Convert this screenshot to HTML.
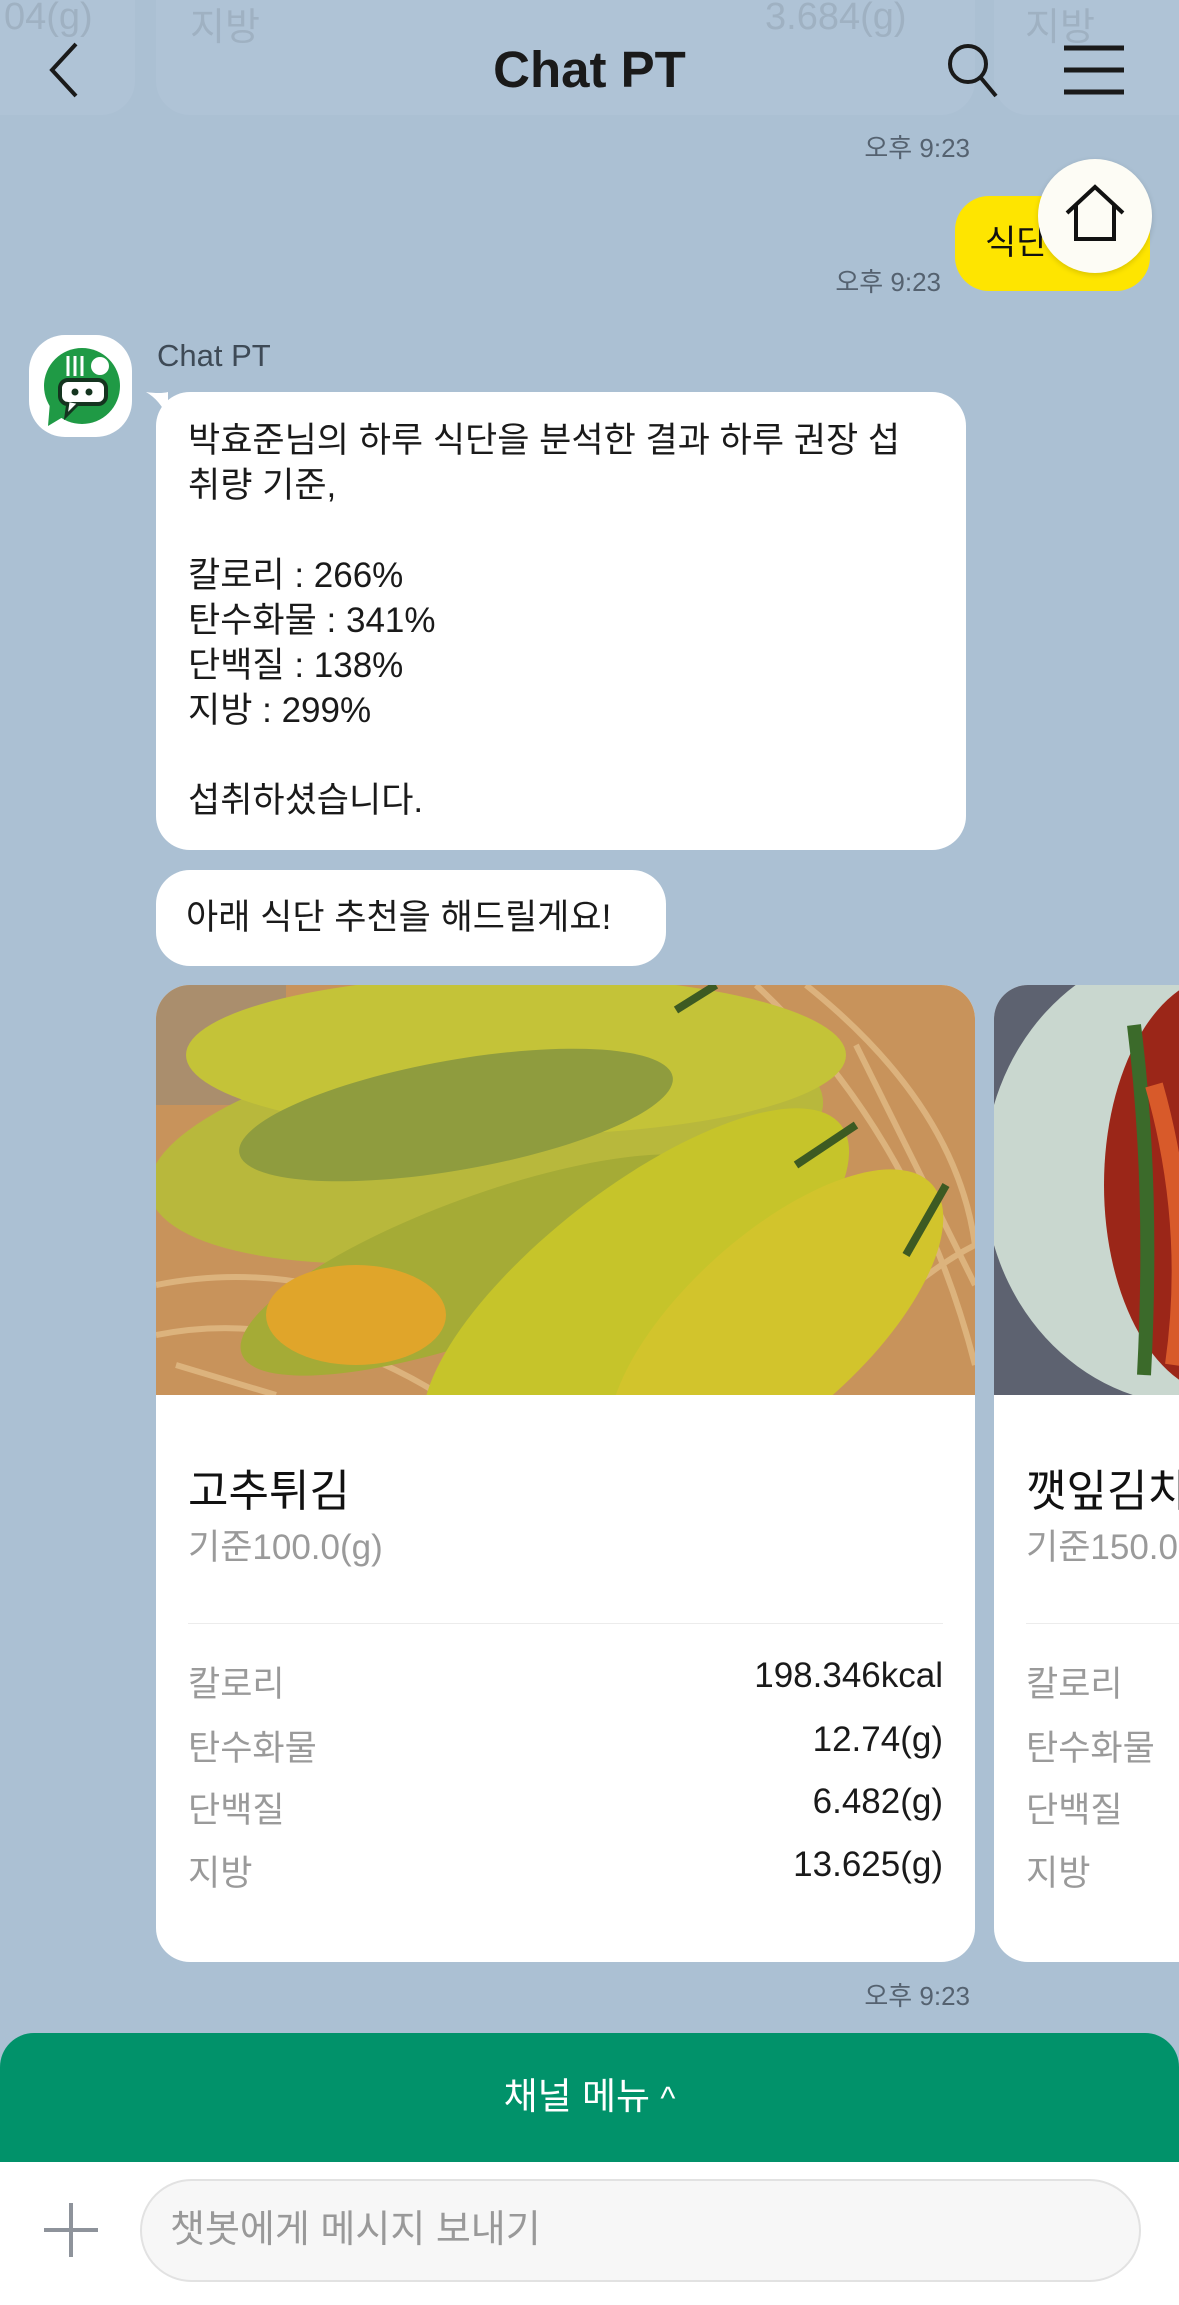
<!DOCTYPE html>
<html><head><meta charset="utf-8">
<style>
*{margin:0;padding:0;box-sizing:border-box}
html,body{width:1179px;height:2305px;overflow:hidden}
body{background:#abc0d3;font-family:"Liberation Sans","Noto Sans CJK KR",sans-serif;position:relative;color:#111}
.abs{position:absolute}
.ts{position:absolute;font-size:26px;color:#556270;white-space:nowrap}
.bub{position:absolute;background:#fff;border-radius:34px}
.t{font-size:35px;line-height:45px;color:#1a1a1a;white-space:nowrap}
.row{position:absolute;left:32px;right:32px;font-size:35px;display:flex;justify-content:space-between}
.row span:first-child{color:#9a9a9a}
.row span:last-child{color:#1a1a1a}
</style></head><body>

<div class="abs" style="left:-40px;top:-40px;width:175px;height:155px;background:#b4c7d9;border-radius:0 0 34px 34px"></div>
<div class="abs" style="left:156px;top:-40px;width:819px;height:155px;background:#b4c7d9;border-radius:0 0 34px 34px"></div>
<div class="abs" style="left:994px;top:-40px;width:185px;height:155px;background:#b4c7d9;border-radius:0 0 0 34px"></div>
<div class="abs" style="left:0;top:0;width:1179px;height:115px;background:rgba(171,192,211,0.55)"></div>
<div class="ts" style="left:4px;top:-4px;font-size:38px;color:#9fb1c2">04(g)</div>
<div class="ts" style="left:190px;top:-4px;font-size:38px;color:#9fb1c2">지방</div>
<div class="ts" style="left:765px;top:-4px;font-size:38px;color:#9fb1c2">3.684(g)</div>
<div class="ts" style="left:1025px;top:-4px;font-size:38px;color:#9fb1c2">지방</div>

<svg class="abs" style="left:44px;top:40px" width="40" height="60" viewBox="0 0 40 60"><path d="M32 4 L8 30 L32 56" fill="none" stroke="#1a1a1a" stroke-width="4"/></svg>
<div class="abs" style="left:0;width:1179px;top:40px;text-align:center;font-size:51px;font-weight:bold;color:#1a1a1a">Chat PT</div>
<svg class="abs" style="left:944px;top:40px" width="60" height="60" viewBox="0 0 60 60"><circle cx="24" cy="24" r="18" fill="none" stroke="#1a1a1a" stroke-width="4"/><path d="M37 38 L52 56" stroke="#1a1a1a" stroke-width="4"/></svg>
<svg class="abs" style="left:1062px;top:44px" width="64" height="52" viewBox="0 0 64 52"><path d="M2 4H62M2 26H62M2 48H62" stroke="#1a1a1a" stroke-width="5"/></svg>

<div class="ts" style="right:209px;top:128px">오후 9:23</div>

<div class="abs" style="left:955px;top:196px;width:195px;height:95px;background:#fee500;border-radius:34px;font-size:34px;line-height:95px;padding-left:30px;white-space:nowrap;overflow:hidden">식단추천</div>
<div class="abs" style="left:1038px;top:159px;width:114px;height:114px;border-radius:50%;background:#fdfcf5;box-shadow:0 2px 6px rgba(0,0,0,.15)"></div>
<svg class="abs" style="left:1063px;top:183px" width="64" height="60" viewBox="0 0 64 60"><path d="M4 30 L32 4 L60 30 M13 22 V56 H51 V22" fill="none" stroke="#111" stroke-width="4"/></svg>
<div class="ts" style="right:238px;top:262px">오후 9:23</div>

<div class="abs" style="left:29px;top:335px;width:103px;height:102px;background:#fff;border-radius:36px"></div>
<svg class="abs" style="left:36px;top:342px" width="90" height="90" viewBox="0 0 90 90">
<circle cx="46" cy="44" r="38" fill="#1f9a45"/><path d="M14 60 L12 84 L32 72 Z" fill="#1f9a45"/>
<path d="M32 14V34M39 14V34M46 14V34" stroke="#fff" stroke-width="3"/>
<circle cx="64" cy="24" r="9" fill="#fff"/>
<rect x="24" y="38" width="46" height="24" rx="8" fill="#fff" stroke="#14341f" stroke-width="4"/>
<path d="M32 60 L30 74 L42 62" fill="#fff" stroke="#14341f" stroke-width="3"/>
<circle cx="39" cy="50" r="3.5" fill="#14341f"/><circle cx="53" cy="50" r="3.5" fill="#14341f"/>
</svg>
<div class="abs" style="left:157px;top:338px;font-size:31px;color:#3e4a56">Chat PT</div>

<svg class="abs" style="left:146px;top:390px" width="30" height="30" viewBox="0 0 30 30"><path d="M0 2 Q14 4 22 2 L22 28 Q14 10 0 2Z" fill="#fff"/></svg>
<div class="bub" style="left:156px;top:392px;width:810px;height:458px;padding:26px 32px">
<div class="t">박효준님의 하루 식단을 분석한 결과 하루 권장 섭<br>취량 기준,<br><br>칼로리 : 266%<br>탄수화물 : 341%<br>단백질 : 138%<br>지방 : 299%<br><br>섭취하셨습니다.</div>
</div>
<div class="bub" style="left:156px;top:870px;width:510px;height:96px;padding:25px 30px"><div class="t">아래 식단 추천을 해드릴게요!</div></div>

<div class="abs" style="left:156px;top:985px;width:819px;height:977px;background:#fff;border-radius:34px;overflow:hidden">
<svg width="819" height="410" viewBox="0 0 819 410" style="display:block">
<rect width="819" height="410" fill="#c8935b"/>
<g stroke="#e2bb86" stroke-width="6" fill="none" opacity=".8">
<path d="M0 300 Q200 260 400 420"/><path d="M0 350 Q150 320 300 420"/><path d="M600 0 Q760 150 819 380"/><path d="M650 0 Q800 120 819 260"/><path d="M700 60 L819 300"/><path d="M20 380 L120 410"/><path d="M640 420 Q740 300 819 260"/>
</g>
<rect x="0" y="0" width="130" height="120" fill="#8c8a80" opacity=".5"/>
<ellipse cx="330" cy="160" rx="340" ry="110" fill="#b8b83c" transform="rotate(-8 330 160)"/>
<ellipse cx="360" cy="70" rx="330" ry="80" fill="#c4c338"/>
<ellipse cx="300" cy="130" rx="220" ry="55" fill="#8f9c3e" transform="rotate(-10 300 130)"/>
<ellipse cx="330" cy="280" rx="260" ry="70" fill="#a5ab36" transform="rotate(-20 330 280)"/>
<ellipse cx="480" cy="300" rx="260" ry="95" fill="#c6c42a" transform="rotate(-38 480 300)"/>
<ellipse cx="620" cy="340" rx="210" ry="90" fill="#d2c42c" transform="rotate(-42 620 340)"/>
<ellipse cx="200" cy="330" rx="90" ry="50" fill="#e0a52a"/>
<path d="M520 25 L560 0" stroke="#3d5a22" stroke-width="8"/><path d="M640 180 L700 140" stroke="#3d5a22" stroke-width="8"/><path d="M750 270 L790 200" stroke="#3d5a22" stroke-width="8"/>
</svg>
<div class="abs" style="left:32px;top:470px;font-size:44px;color:#111">고추튀김</div>
<div class="abs" style="left:32px;top:534px;font-size:35px;color:#9a9a9a">기준100.0(g)</div>
<div class="abs" style="left:32px;right:32px;top:638px;height:1px;background:#ececec"></div>
<div class="row" style="top:671px"><span>칼로리</span><span>198.346kcal</span></div>
<div class="row" style="top:735px"><span>탄수화물</span><span>12.74(g)</span></div>
<div class="row" style="top:797px"><span>단백질</span><span>6.482(g)</span></div>
<div class="row" style="top:860px"><span>지방</span><span>13.625(g)</span></div>
</div>

<div class="abs" style="left:994px;top:985px;width:185px;height:977px;background:#fff;border-radius:34px 0 0 34px;overflow:hidden">
<svg width="185" height="410" viewBox="0 0 185 410" style="display:block">
<rect width="185" height="410" fill="#5d6270"/>
<ellipse cx="200" cy="190" rx="210" ry="230" fill="#c9d7cf"/>
<ellipse cx="230" cy="200" rx="120" ry="210" fill="#9b2618"/>
<path d="M140 40 Q160 200 150 390" stroke="#3b6a2a" stroke-width="14" fill="none"/>
<path d="M160 100 Q200 240 180 380" stroke="#d85a2a" stroke-width="18" fill="none"/>
</svg>
<div class="abs" style="left:32px;top:470px;font-size:44px;color:#111;white-space:nowrap">깻잎김치</div>
<div class="abs" style="left:32px;top:534px;font-size:35px;color:#9a9a9a;white-space:nowrap">기준150.0(g)</div>
<div class="abs" style="left:32px;right:0;top:638px;height:1px;background:#ececec"></div>
<div class="abs" style="left:32px;top:671px;font-size:35px;color:#9a9a9a">칼로리</div>
<div class="abs" style="left:32px;top:735px;font-size:35px;color:#9a9a9a;white-space:nowrap">탄수화물</div>
<div class="abs" style="left:32px;top:797px;font-size:35px;color:#9a9a9a">단백질</div>
<div class="abs" style="left:32px;top:860px;font-size:35px;color:#9a9a9a">지방</div>
</div>

<div class="ts" style="right:209px;top:1976px">오후 9:23</div>

<div class="abs" style="left:0;top:2033px;width:1179px;height:130px;background:#01926a;border-radius:34px 34px 0 0;color:#fff;font-size:37px;text-align:center;line-height:128px">채널 메뉴 <span style="font-size:32px">^</span></div>
<div class="abs" style="left:0;top:2162px;width:1179px;height:143px;background:#fff"></div>
<svg class="abs" style="left:44px;top:2203px" width="54" height="54" viewBox="0 0 54 54"><path d="M27 0V54M0 27H54" stroke="#8e939b" stroke-width="4"/></svg>
<div class="abs" style="left:140px;top:2179px;width:1001px;height:103px;border-radius:52px;background:#f7f7f7;border:2px solid #e2e2e2;font-size:38px;color:#999;line-height:99px;padding-left:28px">챗봇에게 메시지 보내기</div>
</body></html>
